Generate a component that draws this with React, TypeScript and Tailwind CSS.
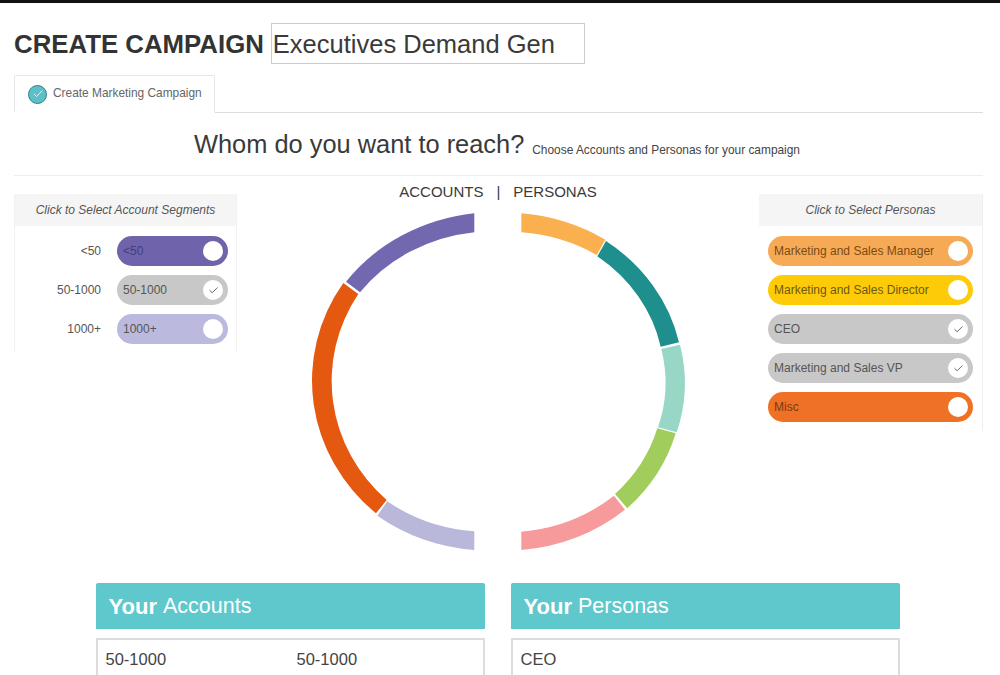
import { Check } from "lucide-react";

type T = { label: string; bg: string; text: string; on?: boolean };

const accounts: (T & { side: string })[] = [
  { side: "<50", label: "<50", bg: "bg-[#6f64ab]", text: "text-[#453d7c]" },
  { side: "50-1000", label: "50-1000", bg: "bg-[#c8c8c8]", text: "text-[#555]", on: true },
  { side: "1000+", label: "1000+", bg: "bg-[#bbbade]", text: "text-[#555]" },
];

const personas: T[] = [
  { label: "Marketing and Sales Manager", bg: "bg-[#f6aa56]", text: "text-[#7d4a14]" },
  { label: "Marketing and Sales Director", bg: "bg-[#fdcb08]", text: "text-[#6d5a10]" },
  { label: "CEO", bg: "bg-[#c8c8c8]", text: "text-[#555]", on: true },
  { label: "Marketing and Sales VP", bg: "bg-[#c8c8c8]", text: "text-[#555]", on: true },
  { label: "Misc", bg: "bg-[#ef7126]", text: "text-[#7a3a12]" },
];

const arcs = [
  { c: "#7268b0", d: "M474.3 214.3 A186 168.5 0 0 0 346 282.7 L360 293.3 A166 150 0 0 1 474.3 233.3 Z" },
  { c: "#e4590f", d: "M343.3 284 A186 175.8 0 0 0 376 514.3 L386.7 501 A166.3 160.2 0 0 1 358.3 295 Z" },
  { c: "#b9b8da", d: "M377.3 516.7 A186 168.5 0 0 0 474.3 551 L474.3 532.3 A166 150 0 0 1 387.3 502.3 Z" },
  { c: "#fbb050", d: "M521.3 214.3 A186 168.5 0 0 1 605.3 240.7 L596.7 256 A166 150 0 0 0 521.3 233.3 Z" },
  { c: "#1f8f8d", d: "M606 242 A186 168.5 0 0 1 679 343.3 L660.7 347.7 A166 150 0 0 0 597.3 257.3 Z" },
  { c: "#98d6c6", d: "M680 345.7 A186 168.5 0 0 1 676.7 433.3 L658 428.3 A166 150 0 0 0 661.3 350 Z" },
  { c: "#a0cd5c", d: "M675.7 434.3 A186 168.5 0 0 1 627.3 509.3 L615 495 A166 150 0 0 0 657.3 429.3 Z" },
  { c: "#f79a9c", d: "M625 510.7 A186 168.5 0 0 1 521.3 551 L521.3 532.7 A166 150 0 0 0 614 496.7 Z" },
];

function Toggle({ t, width }: { t: T; width: string }) {
  return (
    <div className={`flex h-[30px] items-center justify-between rounded-full pl-[6px] pr-[5px] text-[12px] ${width} ${t.bg} ${t.text}`}>
      <span>{t.label}</span>
      <span className="flex h-[20px] w-[20px] items-center justify-center rounded-full bg-white">
        {t.on && <Check size={11} strokeWidth={1.75} className="text-[#444]" />}
      </span>
    </div>
  );
}

function Card({ name, children }: { name: string; children: React.ReactNode }) {
  return (
    <div className="w-[389px]">
      <div className="flex h-[46px] items-center rounded-t-[2px] bg-[#5ec8cd] pl-[13px] text-[22px] text-white">
        <b className="mr-[6px] font-bold">Your</b>
        <span className="text-[21.5px]">{name}</span>
      </div>
      <div className="mt-[9px] flex h-[60px] border-[2px] border-[#dcdcdc] bg-white pl-[8px] pt-[7px] text-[16.5px] text-[#444]">
        {children}
      </div>
    </div>
  );
}

export default function App() {
  return (
    <div className="h-[675px] w-[1000px] overflow-hidden border-t-[3px] border-[#111] bg-white font-['Liberation_Sans',Arial,sans-serif] text-[#333]">
      <div className="flex h-[72px] items-start pl-[14px] pt-[20px]">
        <h1 className="mt-[5px] text-[25.8px] leading-[32px] font-bold text-[#333]">CREATE CAMPAIGN</h1>
        <input
          readOnly
          value="Executives Demand Gen"
          className="ml-[7px] h-[41px] w-[314px] border border-[#ccc] pl-[1px] pt-[2px] text-[25.5px] text-[#3a3a3a] outline-none"
        />
      </div>
      <div className="ml-[14px] mr-[17px] flex h-[38px] border-b border-[#ddd]">
        <div className="-mb-px flex w-[201px] items-center rounded-t-[2px] border border-b-white border-[#e8e8e8] bg-white pl-[13px] text-[11.9px] text-[#666]">
          <span className="mr-[6px] flex h-[19px] w-[19px] items-center justify-center rounded-full border border-[#2f7f88] bg-[#5dc0c8]">
            <Check size={12} strokeWidth={1.5} className="text-white" />
          </span>
          Create Marketing Campaign
        </div>
      </div>
      <div className="ml-[14px] mr-[17px] flex h-[63px] items-center justify-center border-b border-[#eee] pr-[3px]">
        <span className="text-[25.4px] text-[#3a3a3a]">Whom do you want to reach?</span>
        <span className="ml-[8px] mt-[13px] text-[11.9px] text-[#444]">Choose Accounts and Personas for your campaign</span>
      </div>
      <div className="flex pl-[14px] pr-[17px]">
        <div className="mt-[18px] h-[159px] w-[223px] border-x border-[#f2f2f2]">
          <div className="flex h-[32px] items-center justify-center bg-[#f5f5f5] text-[12px] text-[#555] italic">
            Click to Select Account Segments
          </div>
          <div className="flex flex-col gap-[9px] pt-[10px]">
            {accounts.map((a) => (
              <div key={a.side} className="flex items-center">
                <span className="w-[86px] text-right text-[12px] text-[#555]">{a.side}</span>
                <div className="ml-[16px]">
                  <Toggle t={a} width="w-[111px]" />
                </div>
              </div>
            ))}
          </div>
        </div>
        <div className="flex w-[522px] flex-col items-center">
          <div className="flex h-[28px] items-center pt-[5px] text-[15px] text-[#3a3a3a]">
            ACCOUNTS<span className="mx-[13px]">|</span>PERSONAS
          </div>
          <svg viewBox="237 205 522 355" className="block h-[355px] w-[522px]">
            {arcs.map((a) => (
              <path key={a.c} d={a.d} fill={a.c} />
            ))}
          </svg>
        </div>
        <div className="mt-[18px] h-[237px] w-[224px] border-r border-[#eee]">
          <div className="flex h-[32px] items-center justify-center bg-[#f5f5f5] text-[12px] text-[#555] italic">
            Click to Select Personas
          </div>
          <div className="flex flex-col gap-[9px] pl-[9px] pt-[10px]">
            {personas.map((p) => (
              <Toggle key={p.label} t={p} width="w-[205px]" />
            ))}
          </div>
        </div>
      </div>
      <div className="mt-[24px] flex justify-center gap-[26px] pr-[5px]">
        <Card name="Accounts">
          <span className="w-[191px]">50-1000</span>
          <span>50-1000</span>
        </Card>
        <Card name="Personas">
          <span>CEO</span>
        </Card>
      </div>
    </div>
  );
}
